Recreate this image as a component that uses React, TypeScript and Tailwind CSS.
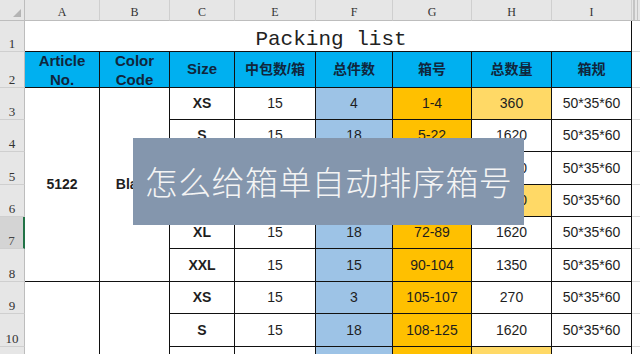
import React from 'react';

// Sheet column letters shown in the header bar (column D is hidden)
const LETTERS = ['A', 'B', 'C', 'E', 'F', 'G', 'H', 'I'];

const HEADERS = ['中包数/箱', '总件数', '箱号', '总数量', '箱规'];

type Line = {
    n: number;
    size: string;
    pack: string;
    boxes: string;
    range: string;
    total: string;
    spec: string;
    hl?: boolean;
};

const SPEC = '50*35*60';

// last row only peeks in at the bottom edge, so its cells stay blank
const LINES: Line[] = [
    { n: 3, size: 'XS', pack: '15', boxes: '4', range: '1-4', total: '360', spec: SPEC, hl: true },
    { n: 4, size: 'S', pack: '15', boxes: '18', range: '5-22', total: '1620', spec: SPEC },
    { n: 5, size: 'M', pack: '15', boxes: '18', range: '23-40', total: '1620', spec: SPEC },
    { n: 6, size: 'L', pack: '15', boxes: '31', range: '41-71', total: '2790', spec: SPEC, hl: true },
    { n: 7, size: 'XL', pack: '15', boxes: '18', range: '72-89', total: '1620', spec: SPEC },
    { n: 8, size: 'XXL', pack: '15', boxes: '15', range: '90-104', total: '1350', spec: SPEC },
    { n: 9, size: 'XS', pack: '15', boxes: '3', range: '105-107', total: '270', spec: SPEC },
    { n: 10, size: 'S', pack: '15', boxes: '18', range: '108-125', total: '1620', spec: SPEC },
    { n: 11, size: '', pack: '', boxes: '', range: '', total: '', spec: '', hl: true },
];

const SERIF = "font-['Liberation_Serif','DejaVu_Serif',serif]";
const SANS = "font-['Liberation_Sans','Noto_Sans_CJK_SC',sans-serif]";
const CELL = 'flex items-center justify-center border-r border-b border-[#111]';

function RowNum({ n, active, label = true }: { n: number; active?: boolean; label?: boolean }) {
    return (
        <div
            className={`flex items-end justify-center pb-[1px] text-[13px] leading-none ${SERIF} border-b border-[#cfcfcf] ${
                active ? 'bg-[#d4d4d4] text-[#444] border-r-2 border-r-[#217346]' : 'bg-[#e6e6e6] text-[#333] border-r border-r-[#bdbdbd]'
            }`}
        >
            {label ? n : ''}
        </div>
    );
}

function Filler() {
    return <div className="bg-white border-b border-[#dadada]" />;
}

export default function App() {
    return (
        <div className="relative w-[640px] h-[354px] overflow-hidden bg-white">
            <div
                className={`grid grid-cols-[25px_75px_70px_65px_81px_77px_79px_80px_80px_8px] grid-rows-[21px_31px_36px_32px_32px_33px_32px_32px_33px_32px_33px_32px] ${SANS} text-[#1e1e1e]`}
            >
                {/* column letter bar */}
                <div className="relative bg-[#e6e6e6] border-r border-b border-[#bdbdbd]">
                    <div className="absolute right-[3px] bottom-[3px] w-0 h-0 border-l-[8px] border-l-transparent border-b-[8px] border-b-[#b4b4b4]" />
                </div>
                {LETTERS.map((l) => (
                    <div
                        key={l}
                        className={`flex items-center justify-center pt-[3px] bg-[#e6e6e6] border-r border-b border-[#cfcfcf] border-b-[#bdbdbd] text-[12px] text-[#333] ${SERIF}`}
                    >
                        {l}
                    </div>
                ))}
                <div className="flex bg-[#e6e6e6] border-b border-[#bdbdbd]">
                    <div className="w-[2px] ml-[1px] bg-[#c4c4c4]" />
                    <div className="w-[1px] ml-[2px] bg-[#c4c4c4]" />
                </div>

                {/* row 1: title */}
                <RowNum n={1} />
                <div className="col-span-8 flex items-end justify-center pb-[1px] border-r border-b border-[#111] bg-white">
                    <span className="font-['Liberation_Mono','DejaVu_Sans_Mono',monospace] text-[21px] leading-none text-[#222] ml-[6px]">
                        Packing list
                    </span>
                </div>
                <Filler />

                {/* row 2: headers */}
                <RowNum n={2} />
                <div className={`${CELL} flex-col bg-[#00b0f0] text-[15px] font-bold leading-[19px] text-[#10263c]`}>
                    <span>Article</span>
                    <span>No.</span>
                </div>
                <div className={`${CELL} flex-col bg-[#00b0f0] text-[15px] font-bold leading-[19px] text-[#10263c]`}>
                    <span>Color</span>
                    <span>Code</span>
                </div>
                <div className={`${CELL} bg-[#00b0f0] text-[15px] font-bold text-[#10263c]`}>Size</div>
                {HEADERS.map((h) => (
                    <div key={h} className={`${CELL} bg-[#00b0f0] text-[14px] font-bold text-[#10263c]`}>
                        {h}
                    </div>
                ))}
                <Filler />

                {/* packing lines */}
                {LINES.map((r) => (
                    <React.Fragment key={r.n}>
                        <RowNum n={r.n} active={r.n === 7} label={r.n < 11} />
                        {(r.n === 3 || r.n === 9) && (
                            <>
                                <div className={`${CELL} ${r.n === 3 ? 'row-span-6' : 'row-span-3'} bg-white text-[14px] font-bold`}>
                                    {r.n === 3 ? '5122' : ''}
                                </div>
                                <div className={`${CELL} ${r.n === 3 ? 'row-span-6' : 'row-span-3'} bg-white text-[14px] font-bold`}>
                                    {r.n === 3 ? 'Black' : ''}
                                </div>
                            </>
                        )}
                        <div className={`${CELL} bg-white text-[14px] font-bold`}>{r.size}</div>
                        <div className={`${CELL} bg-white text-[14px]`}>{r.pack}</div>
                        <div className={`${CELL} bg-[#9dc3e6] text-[14px]`}>{r.boxes}</div>
                        <div className={`${CELL} bg-[#ffc000] text-[14px]`}>{r.range}</div>
                        <div className={`${CELL} ${r.hl ? 'bg-[#ffd966]' : 'bg-white'} text-[14px]`}>{r.total}</div>
                        <div className={`${CELL} bg-white text-[14px]`}>{r.spec}</div>
                        <Filler />
                    </React.Fragment>
                ))}
            </div>

            {/* caption banner laid over the sheet */}
            <div className="absolute left-[133px] top-[138px] w-[391px] h-[87px] bg-[#8496ad] flex items-center justify-center">
                <span className="font-['Noto_Sans_CJK_SC',sans-serif] font-light text-[33px] tracking-[0.4px] leading-none text-[#f4f4f4]">
                    怎么给箱单自动排序箱号
                </span>
            </div>
        </div>
    );
}
